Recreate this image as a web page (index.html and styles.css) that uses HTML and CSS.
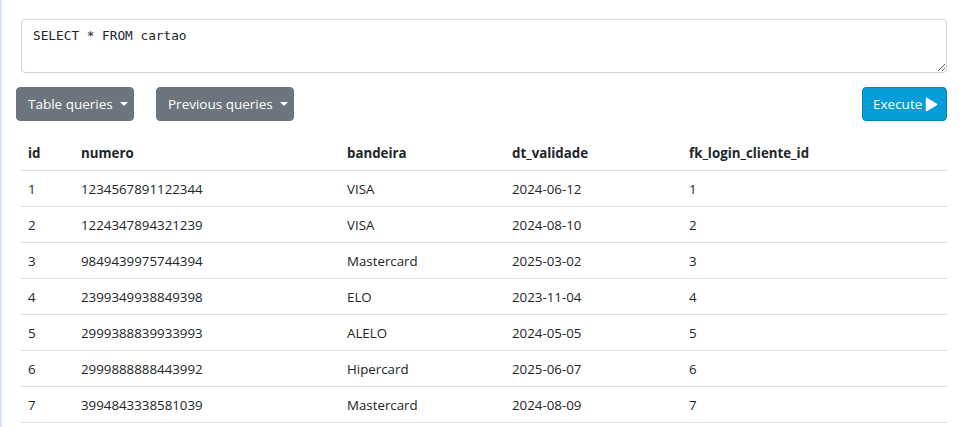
FILE: index.html
```html
<!DOCTYPE html>
<html>
<head>
<meta charset="utf-8">
<link rel="stylesheet" href="styles.css">
</head>
<body>
<div class="page">
  <textarea class="query" spellcheck="false">SELECT * FROM cartao</textarea>
  <div class="toolbar">
    <div class="left-btns">
      <button class="btn btn-gray btn-table">Table queries <span class="caret"></span></button>
      <button class="btn btn-gray btn-prev">Previous queries <span class="caret"></span></button>
    </div>
    <button class="btn btn-exec">Execute <svg class="play" width="13" height="15" viewBox="0 0 13 15"><path d="M1.5 1.5 L11.5 7.5 L1.5 13.5 Z" fill="#fff" stroke="#fff" stroke-width="1.5" stroke-linejoin="round"/></svg></button>
  </div>
  <table class="results">
    <thead>
      <tr><th class="c1">id</th><th class="c2">numero</th><th class="c3">bandeira</th><th class="c4">dt_validade</th><th class="c5">fk_login_cliente_id</th></tr>
    </thead>
    <tbody>
      <tr><td>1</td><td>1234567891122344</td><td>VISA</td><td>2024-06-12</td><td>1</td></tr>
      <tr><td>2</td><td>1224347894321239</td><td>VISA</td><td>2024-08-10</td><td>2</td></tr>
      <tr><td>3</td><td>9849439975744394</td><td>Mastercard</td><td>2025-03-02</td><td>3</td></tr>
      <tr><td>4</td><td>2399349938849398</td><td>ELO</td><td>2023-11-04</td><td>4</td></tr>
      <tr><td>5</td><td>2999388839933993</td><td>ALELO</td><td>2024-05-05</td><td>5</td></tr>
      <tr><td>6</td><td>2999888888443992</td><td>Hipercard</td><td>2025-06-07</td><td>6</td></tr>
      <tr><td>7</td><td>3994843338581039</td><td>Mastercard</td><td>2024-08-09</td><td>7</td></tr>
    </tbody>
  </table>
</div>
</body>
</html>
```
FILE: styles.css
```css
html, body {
  margin: 0;
  padding: 0;
  background: #fff;
}
body {
  border-left: 2px solid #d3e2f1;
  min-height: 427px;
  box-sizing: border-box;
  font-family: "Open Sans", "Noto Sans", sans-serif;
  color: #212529;
  overflow: hidden;
}
.page {
  width: 931px;
  margin-left: 14px;
  padding-top: 19px;
}
.query {
  display: block;
  box-sizing: border-box;
  width: 926px;
  height: 54px;
  margin-left: 5px;
  padding: 7px 11px;
  border: 1px solid #ced4da;
  border-radius: 4px;
  font-family: "DejaVu Sans Mono", "Liberation Mono", monospace;
  font-size: 12.75px;
  line-height: 18px;
  color: #212529;
  resize: vertical;
  outline: none;
}
.toolbar {
  display: flex;
  justify-content: space-between;
  margin-top: 14px;
}
.left-btns {
  display: flex;
  gap: 22px;
}
.btn {
  height: 34px;
  box-sizing: border-box;
  border-radius: 4px;
  font-family: "Open Sans", "Noto Sans", sans-serif;
  font-size: 13.5px;
  color: #fff;
  display: flex;
  align-items: center;
  white-space: nowrap;
  cursor: pointer;
}
.btn-gray {
  background: #6c757d;
  border: 1px solid #6c757d;
  padding: 0 11px;
}
.btn-table { width: 118px; }
.btn-prev { width: 138px; }
.caret {
  display: inline-block;
  width: 0;
  height: 0;
  margin-left: 7px;
  border-left: 4px solid transparent;
  border-right: 4px solid transparent;
  border-top: 4px solid #fff;
}
.btn-exec {
  background: #079dd9;
  border: 1px solid #0782b8;
  width: 85px;
  padding: 0 0 0 10px;
}
.play {
  margin-left: 3px;
}
.results {
  margin-top: 14px;
  margin-left: 5px;
  width: 926px;
  border-collapse: collapse;
  font-size: 13.3px;
}
.results th, .results td {
  text-align: left;
  padding: 0 7px;
  height: 35px;
  border-bottom: 1px solid #dee2e6;
}
.results th {
  font-weight: 700;
  height: 35px;
}
.c1 { width: 39px; }
.c2 { width: 252px; }
.c3 { width: 151px; }
.c4 { width: 163px; }
```
